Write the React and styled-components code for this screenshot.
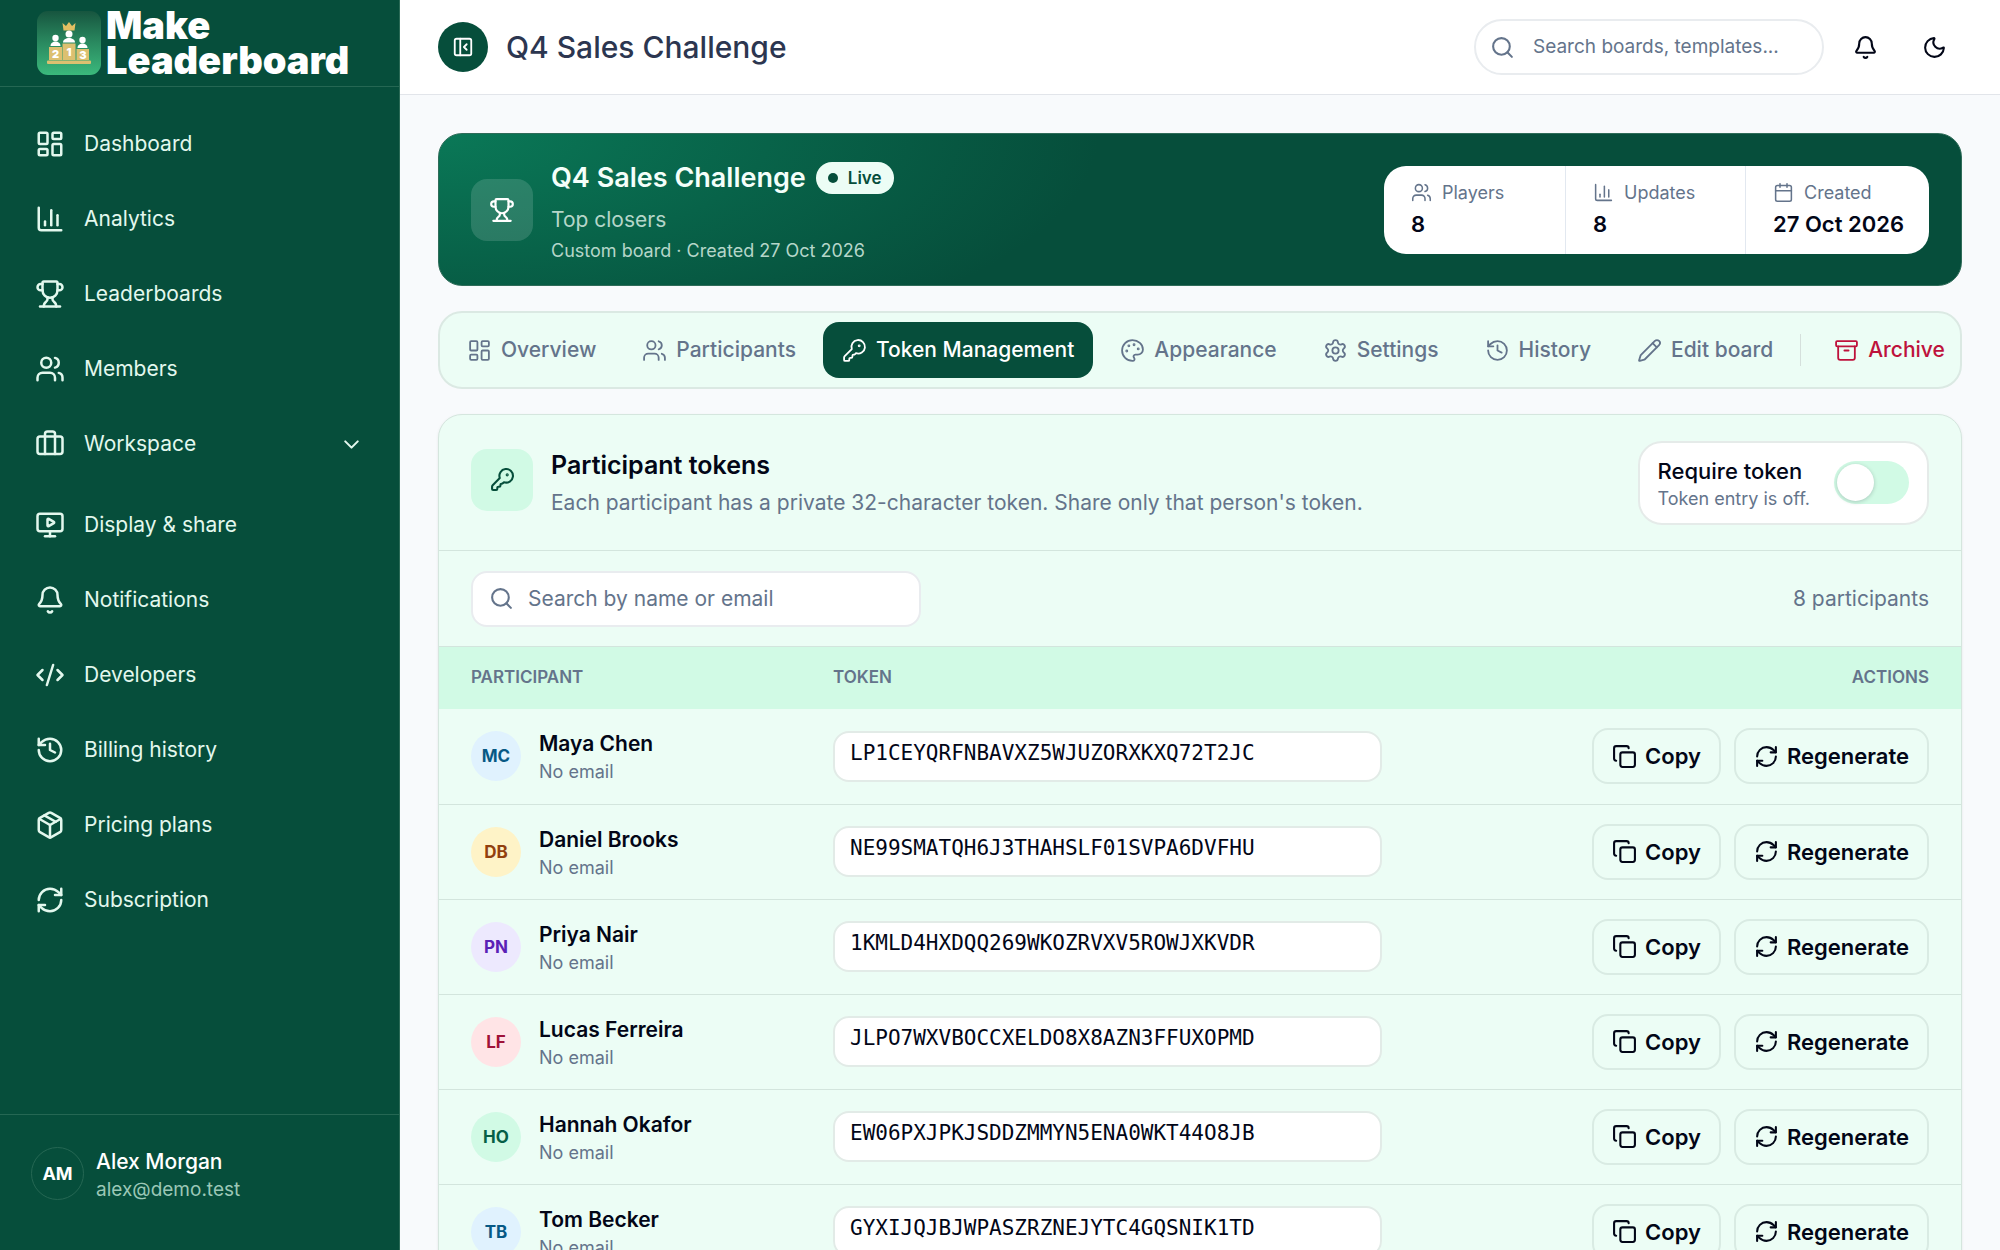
import React from 'react'
import styled, { createGlobalStyle, css } from 'styled-components'
import {
    LayoutDashboard, ChartColumn, Trophy, Users, Briefcase, MonitorPlay,
    Bell, CodeXml, History, Package, RefreshCw, ChevronDown, PanelLeftClose, Search, Moon,
    KeyRound, Palette, Settings, Pencil, Archive, Calendar, Copy,
} from 'lucide-react'

const GlobalStyle = createGlobalStyle`
    *, *::before, *::after {
        box-sizing: border-box;
    }
    body {
        margin: 0;
        background: #f8fafc;
        color: #020617;
        font-family: Inter, "Liberation Sans", sans-serif;
        font-size: 21px;
        line-height: 28px;
    }
    h1, h2, p {
        margin: 0;
    }
    button, input {
        font: inherit;
        color: inherit;
    }
    button {
        cursor: pointer;
    }
    a {
        color: inherit;
        text-decoration: none;
    }
    svg {
        flex: none;
    }
`;

const Shell = styled.div`
    display: grid;
    grid-template-columns: 400px minmax(0, 1fr);
    height: 100vh;
    overflow: hidden;
`;

/* ---------- sidebar ---------- */

const Sidebar = styled.aside`
    display: flex;
    flex-direction: column;
    background: #064e3b;
    color: #e3f8ee;
    border-right: 1px solid #2a6a56;
    min-height: 0;
`;

const Brand = styled.a`
    display: flex;
    align-items: center;
    gap: 5px;
    height: 87px;
    padding-left: 37px;
    border-bottom: 1px solid #256753;
`;

const BrandName = styled.span`
    color: #fff;
    font-size: 38px;
    font-weight: 900;
    line-height: 35px;
`;

const Nav = styled.nav`
    flex: 1;
    display: flex;
    flex-direction: column;
    gap: 19px;
    padding: 29px 16px;
`;

const NavGroup = styled.div`
    display: flex;
    flex-direction: column;
    gap: 19px;
    padding-bottom: ${p => (p.$spaced ? '6px' : '0')};
`;

const NavLink = styled.a`
    display: flex;
    align-items: center;
    gap: 19px;
    height: 56px;
    padding: 0 19px;
`;

const NavLabel = styled.span`
    flex: 1;
`;

const Account = styled.div`
    display: flex;
    align-items: center;
    gap: 12px;
    height: 136px;
    padding: 0 31px 18px;
    border-top: 1px solid #256753;
`;

const AccountAvatar = styled.span`
    display: grid;
    place-items: center;
    width: 53px;
    height: 53px;
    border: 1px solid #256753;
    border-radius: 50%;
    color: #fff;
    font-size: 18px;
    font-weight: 700;
`;

const AccountText = styled.div`
    padding-top: 4px;
`;

const AccountName = styled.div`
    color: #fff;
    font-weight: 500;
`;

const AccountMail = styled.div`
    color: #9bc7b6;
    font-size: 19px;
`;

/* ---------- top bar ---------- */

const Main = styled.main`
    display: flex;
    flex-direction: column;
    min-width: 0;
    min-height: 0;
`;

const TopBar = styled.header`
    display: flex;
    flex: none;
    align-items: center;
    height: 95px;
    padding: 0 38px;
    background: #fff;
    border-bottom: 1px solid #e2e5ea;
`;

const CollapseButton = styled.button`
    display: grid;
    place-items: center;
    width: 50px;
    height: 50px;
    margin-right: 18px;
    padding: 0;
    border: 0;
    border-radius: 50%;
    background: #064e3b;
    color: #fff;
`;

const PageTitle = styled.h1`
    flex: 1;
    color: #2c3650;
    font-size: 30px;
    font-weight: 500;
    line-height: 38px;
`;

const SearchField = styled.label`
    display: flex;
    align-items: center;
    gap: ${p => (p.$round ? '18px' : '14px')};
    width: ${p => (p.$round ? '350px' : '450px')};
    height: 56px;
    padding: 0 ${p => (p.$round ? '14px' : '16px')};
    border: 2px solid #e9ecef;
    border-radius: ${p => (p.$round ? '28px' : '16px')};
    background: #fff;
    color: #64748b;

    input {
        flex: 1;
        min-width: 0;
        padding: 0;
        border: 0;
        outline: 0;
        background: none;
        font-size: ${p => (p.$round ? '19px' : '21px')};
    }
    input::placeholder {
        color: #64748b;
        opacity: 1;
    }
`;

const IconButton = styled.button`
    display: grid;
    place-items: center;
    width: 56px;
    height: 56px;
    margin-left: 13px;
    padding: 0;
    border: 0;
    background: none;
`;

/* ---------- page ---------- */

const Content = styled.div`
    flex: 1;
    min-height: 0;
    overflow: hidden;
    padding: 38px;
`;

const Hero = styled.section`
    display: flex;
    align-items: center;
    gap: 18px;
    height: 153px;
    margin-bottom: 25px;
    padding: 0 32px;
    border: 1px solid #2f6c59;
    border-radius: 24px;
    background: radial-gradient(660px 240px at 0 0, #0a7857 0, #064e3b 100%);
`;

const Tile = styled.div`
    display: grid;
    flex: none;
    place-items: center;
    width: 62px;
    height: 62px;
    border-radius: 16px;
    ${p => p.$onDark
        ? css`background: rgba(255, 255, 255, 0.14); color: #fff;`
        : css`background: #d1fae5; color: #064e3b;`}
`;

const HeroText = styled.div`
    flex: 1;
    padding-top: 8px;
    color: #b5d6c9;
`;

const HeroTitleRow = styled.div`
    display: flex;
    align-items: center;
    gap: 10px;
    margin-bottom: 12px;
`;

const HeroTitle = styled.h2`
    color: #f4fffa;
    font-size: 27px;
    font-weight: 600;
    line-height: 32px;
`;

const LiveBadge = styled.span`
    display: flex;
    align-items: center;
    gap: 10px;
    height: 32px;
    padding: 0 12px;
    border-radius: 16px;
    background: #ecfdf5;
    color: #064e3b;
    font-size: 17px;
    font-weight: 600;

    &::before {
        content: '';
        width: 10px;
        height: 10px;
        border-radius: 50%;
        background: #064e3b;
    }
`;

const HeroMeta = styled.p`
    margin-top: 3px;
    font-size: 18px;
`;

const Stats = styled.dl`
    display: grid;
    grid-template-columns: 181px 180px 184px;
    margin: 0;
    border-radius: 22px;
    background: #fff;
`;

const Stat = styled.div`
    height: 88px;
    padding: 13px 0 0 27px;

    & + & {
        border-left: 1px solid #e2e8f0;
    }
    dt {
        display: flex;
        align-items: center;
        gap: 10px;
        color: #64748b;
        font-size: 18px;
    }
    dd {
        margin: 3px 0 0;
        font-size: 22px;
        font-weight: 600;
    }
`;

const Tabs = styled.nav`
    display: flex;
    align-items: center;
    gap: 8px;
    height: 78px;
    margin-bottom: 25px;
    padding: 0 8px;
    overflow: hidden;
    border: 2px solid #dbe9e3;
    border-radius: 24px;
    background: #ecfdf5;
`;

const Tab = styled.a`
    display: flex;
    flex: none;
    align-items: center;
    gap: 9px;
    height: 56px;
    padding: 0 19px;
    border-radius: 16px;
    font-weight: 500;
    background: ${p => (p.$active ? '#064e3b' : 'none')};
    color: ${p => (p.$active ? '#fff' : p.$danger ? '#be123c' : '#64748b')};
`;

const TabRule = styled.span`
    flex: none;
    width: 1px;
    height: 32px;
    margin-right: 6px;
    background: #d5e0dc;
`;

const Panel = styled.section`
    border: 1px solid #d5e6de;
    border-radius: 24px;
    background: #ecfdf5;
    box-shadow: 0 1px 3px rgba(2, 6, 23, 0.08);
    overflow: hidden;
`;

const PanelHead = styled.div`
    display: flex;
    align-items: center;
    justify-content: space-between;
    height: 136px;
    padding: 0 32px;
    border-bottom: 1px solid #d3e5dd;
`;

const PanelIntro = styled.div`
    display: flex;
    align-items: flex-start;
    gap: 18px;
    color: #64748b;
`;

const PanelTitle = styled.h2`
    margin-bottom: 8px;
    color: #020617;
    font-size: 25px;
    font-weight: 600;
    line-height: 32px;
`;

const RequireCard = styled.label`
    display: flex;
    align-items: center;
    gap: 24px;
    height: 84px;
    padding: 0 18px;
    border: 2px solid #e5ebe9;
    border-radius: 24px;
    background: #fff;
`;

const RequireText = styled.span`
    display: block;
    padding-top: 4px;

    strong {
        display: block;
        font-size: 22px;
        font-weight: 500;
    }
    small {
        display: block;
        color: #64748b;
        font-size: 18px;
    }
`;

const Switch = styled.input`
    appearance: none;
    flex: none;
    width: 75px;
    height: 43px;
    margin: 0;
    padding: 3px;
    border-radius: 22px;
    background: #d1fae5;

    &::before {
        content: '';
        display: block;
        width: 37px;
        height: 37px;
        border-radius: 50%;
        background: #fff;
        box-shadow: 0 1px 4px rgba(2, 6, 23, 0.2);
    }
    &:checked {
        padding-left: 35px;
        background: #064e3b;
    }
`;

const Toolbar = styled.div`
    display: flex;
    align-items: center;
    justify-content: space-between;
    height: 96px;
    padding: 0 32px;
    border-bottom: 1px solid #d3e5dd;
    color: #64748b;
`;

const TokenTable = styled.table`
    width: 100%;
    table-layout: fixed;
    border-collapse: collapse;

    th {
        height: 62px;
        padding: 0 20px 2px;
        background: #d1fae5;
        color: #64748b;
        font-size: 17px;
        font-weight: 600;
        text-align: left;
    }
    td {
        height: 95px;
        padding: 0 20px;
        border-bottom: 1px solid #d3e5dd;
    }
    th:first-child, td:first-child {
        width: 374px;
        padding-left: 32px;
    }
    th:nth-child(2), td:nth-child(2) {
        width: 589px;
    }
    th:last-child {
        padding-right: 32px;
        text-align: right;
    }
    td:last-child {
        padding-right: 32px;
    }
`;

const Person = styled.div`
    display: flex;
    align-items: center;
    gap: 18px;
`;

const Avatar = styled.span`
    display: grid;
    flex: none;
    place-items: center;
    width: 50px;
    height: 50px;
    border-radius: 50%;
    background: ${p => p.$bg};
    color: ${p => p.$fg};
    font-size: 17px;
    font-weight: 700;
`;

const PersonText = styled.div`
    padding-top: 4px;
`;

const PersonName = styled.div`
    font-weight: 600;
`;

const PersonMail = styled.div`
    color: #64748b;
    font-size: 18px;
`;

const Token = styled.code`
    display: block;
    height: 51px;
    padding: 6px 15px;
    border: 2px solid #e2ebe7;
    border-radius: 16px;
    background: #fff;
    font-family: "DejaVu Sans Mono", "Liberation Mono", monospace;
    font-size: 21px;
`;

const Actions = styled.div`
    display: flex;
    justify-content: flex-end;
    gap: 13px;
`;

const ActionButton = styled.button`
    display: flex;
    align-items: center;
    gap: 8px;
    height: 56px;
    padding: 0 18px;
    border: 2px solid #d9ebe3;
    border-radius: 16px;
    background: none;
    font-size: 22px;
    font-weight: 600;
`;

const mainLinks = [
    { label: 'Dashboard', icon: LayoutDashboard },
    { label: 'Analytics', icon: ChartColumn },
    { label: 'Leaderboards', icon: Trophy },
    { label: 'Members', icon: Users },
    { label: 'Workspace', icon: Briefcase, open: true },
];

const moreLinks = [
    { label: 'Display & share', icon: MonitorPlay },
    { label: 'Notifications', icon: Bell },
    { label: 'Developers', icon: CodeXml },
    { label: 'Billing history', icon: History },
    { label: 'Pricing plans', icon: Package },
    { label: 'Subscription', icon: RefreshCw },
];

const tabs = [
    { label: 'Overview', icon: LayoutDashboard },
    { label: 'Participants', icon: Users },
    { label: 'Token Management', icon: KeyRound, active: true },
    { label: 'Appearance', icon: Palette },
    { label: 'Settings', icon: Settings },
    { label: 'History', icon: History },
    { label: 'Edit board', icon: Pencil },
];

const participants = [
    { name: 'Maya Chen', initials: 'MC', bg: '#e0f2fe', fg: '#075985', token: 'LP1CEYQRFNBAVXZ5WJUZORXKXQ72T2JC' },
    { name: 'Daniel Brooks', initials: 'DB', bg: '#fef3c7', fg: '#92400e', token: 'NE99SMATQH6J3THAHSLF01SVPA6DVFHU' },
    { name: 'Priya Nair', initials: 'PN', bg: '#ede9fe', fg: '#5b21b6', token: '1KMLD4HXDQQ269WKOZRVXV5ROWJXKVDR' },
    { name: 'Lucas Ferreira', initials: 'LF', bg: '#ffe4e6', fg: '#9f1239', token: 'JLPO7WXVBOCCXELDO8X8AZN3FFUXOPMD' },
    { name: 'Hannah Okafor', initials: 'HO', bg: '#d1fae5', fg: '#065f46', token: 'EW06PXJPKJSDDZMMYN5ENA0WKT44O8JB' },
    { name: 'Tom Becker', initials: 'TB', bg: '#e0f2fe', fg: '#075985', token: 'GYXIJQJBJWPASZRZNEJYTC4GQSNIK1TD' },
];

const Logo = () => (
    <svg width="64" height="64" viewBox="0 0 64 64" aria-hidden="true">
        <defs>
            <linearGradient id="logo-bg" x1="0" y1="0" x2="0" y2="1">
                <stop offset="0" stopColor="#17553f" />
                <stop offset="0.5" stopColor="#2a8a60" />
                <stop offset="1" stopColor="#3bb97c" />
            </linearGradient>
        </defs>
        <rect width="64" height="64" rx="11" fill="url(#logo-bg)" />
        <path d="M25.500 12l3.500 3 3-4 3 4 3.500-3-1 7.500h-11z" fill="#e3bf62" />
        <g fill="#fff">
            <circle cx="32" cy="23" r="3.500" />
            <path d="M26 31.500c0-6 12-6 12 0z" />
            <circle cx="18.500" cy="27" r="3.200" />
            <path d="M13.500 35c0-6 10-6 10 0z" />
            <circle cx="45.500" cy="29" r="3.200" />
            <path d="M40.500 37c0-6 10-6 10 0z" />
        </g>
        <path d="M12 36h13v13H12zM25.500 32.500h13V49h-13zM39.500 38h12.500v11H39.500z" fill="#dcc070" />
        <rect x="10" y="49.500" width="44" height="3.500" rx="1" fill="#dcc070" />
        <g fill="#fff" fontSize="11" fontWeight="900" textAnchor="middle">
            <text x="18.500" y="46.500">2</text>
            <text x="32" y="44.500">1</text>
            <text x="46" y="47.500">3</text>
        </g>
    </svg>
);

const NavItem = ({ item }) => {
    const Icon = item.icon;
    return (
        <NavLink href="#">
            <Icon size={30} />
            <NavLabel>{item.label}</NavLabel>
            {item.open && <ChevronDown size={25} />}
        </NavLink>
    );
};

const App = () => (
    <Shell>
        <GlobalStyle />
        <Sidebar>
            <Brand href="#">
                <Logo />
                <BrandName>Make<br />Leaderboard</BrandName>
            </Brand>
            <Nav>
                <NavGroup $spaced>
                    {mainLinks.map(item => <NavItem key={item.label} item={item} />)}
                </NavGroup>
                <NavGroup>
                    {moreLinks.map(item => <NavItem key={item.label} item={item} />)}
                </NavGroup>
            </Nav>
            <Account>
                <AccountAvatar>AM</AccountAvatar>
                <AccountText>
                    <AccountName>Alex Morgan</AccountName>
                    <AccountMail>alex@demo.test</AccountMail>
                </AccountText>
            </Account>
        </Sidebar>

        <Main>
            <TopBar>
                <CollapseButton aria-label="Collapse sidebar"><PanelLeftClose size={22} /></CollapseButton>
                <PageTitle>Q4 Sales Challenge</PageTitle>
                <SearchField $round>
                    <Search size={25} />
                    <input type="search" aria-label="Search" placeholder="Search boards, templates..." />
                </SearchField>
                <IconButton aria-label="Notifications"><Bell size={25} /></IconButton>
                <IconButton aria-label="Dark mode"><Moon size={25} /></IconButton>
            </TopBar>

            <Content>
                <Hero>
                    <Tile $onDark><Trophy size={26} /></Tile>
                    <HeroText>
                        <HeroTitleRow>
                            <HeroTitle>Q4 Sales Challenge</HeroTitle>
                            <LiveBadge>Live</LiveBadge>
                        </HeroTitleRow>
                        <p>Top closers</p>
                        <HeroMeta>Custom board · Created 27 Oct 2026</HeroMeta>
                    </HeroText>
                    <Stats>
                        <Stat>
                            <dt><Users size={21} strokeWidth={1.75} />Players</dt>
                            <dd>8</dd>
                        </Stat>
                        <Stat>
                            <dt><ChartColumn size={21} strokeWidth={1.75} />Updates</dt>
                            <dd>8</dd>
                        </Stat>
                        <Stat>
                            <dt><Calendar size={21} strokeWidth={1.75} />Created</dt>
                            <dd>27 Oct 2026</dd>
                        </Stat>
                    </Stats>
                </Hero>

                <Tabs>
                    {tabs.map(({ label, icon: Icon, active }) => (
                        <Tab key={label} href="#" $active={active}>
                            <Icon size={25} strokeWidth={1.75} />
                            {label}
                        </Tab>
                    ))}
                    <TabRule />
                    <Tab href="#" $danger><Archive size={25} strokeWidth={1.75} />Archive</Tab>
                </Tabs>

                <Panel>
                    <PanelHead>
                        <PanelIntro>
                            <Tile><KeyRound size={25} /></Tile>
                            <div>
                                <PanelTitle>Participant tokens</PanelTitle>
                                <p>Each participant has a private 32-character token. Share only that person's token.</p>
                            </div>
                        </PanelIntro>
                        <RequireCard>
                            <RequireText>
                                <strong>Require token</strong>
                                <small>Token entry is off.</small>
                            </RequireText>
                            <Switch type="checkbox" role="switch" />
                        </RequireCard>
                    </PanelHead>
                    <Toolbar>
                        <SearchField>
                            <Search size={25} />
                            <input type="search" aria-label="Search participants" placeholder="Search by name or email" />
                        </SearchField>
                        <span>8 participants</span>
                    </Toolbar>
                    <TokenTable>
                        <thead>
                            <tr>
                                <th>PARTICIPANT</th>
                                <th>TOKEN</th>
                                <th>ACTIONS</th>
                            </tr>
                        </thead>
                        <tbody>
                            {participants.map(p => (
                                <tr key={p.initials}>
                                    <td>
                                        <Person>
                                            <Avatar $bg={p.bg} $fg={p.fg}>{p.initials}</Avatar>
                                            <PersonText>
                                                <PersonName>{p.name}</PersonName>
                                                <PersonMail>No email</PersonMail>
                                            </PersonText>
                                        </Person>
                                    </td>
                                    <td><Token>{p.token}</Token></td>
                                    <td>
                                        <Actions>
                                            <ActionButton><Copy size={25} />Copy</ActionButton>
                                            <ActionButton><RefreshCw size={25} />Regenerate</ActionButton>
                                        </Actions>
                                    </td>
                                </tr>
                            ))}
                        </tbody>
                    </TokenTable>
                </Panel>
            </Content>
        </Main>
    </Shell>
);

export default App;
